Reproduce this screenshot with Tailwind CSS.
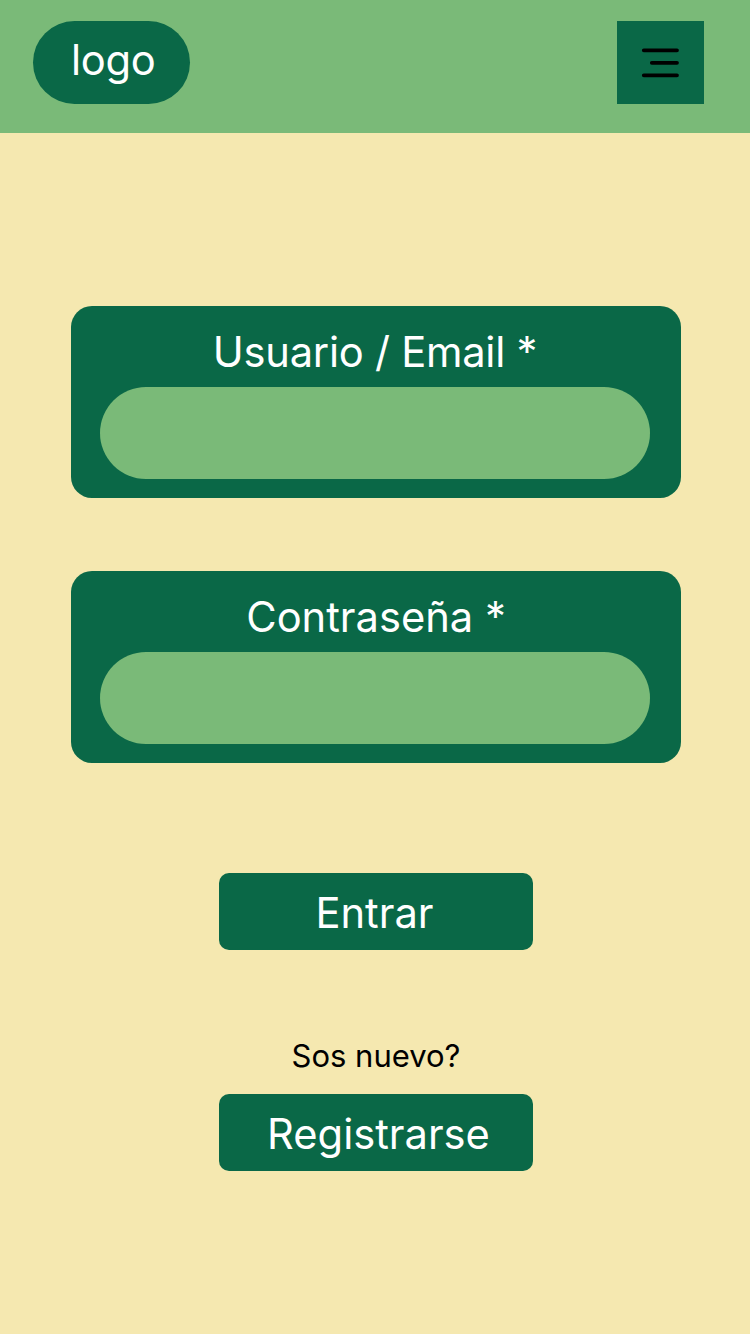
<!DOCTYPE html>
<html lang="es">
<head>
<meta charset="utf-8">
<title>Ingresar</title>
<script src="https://cdn.jsdelivr.net/npm/@tailwindcss/browser@4"></script>
</head>
<body class="h-[1334px] w-[750px] overflow-hidden bg-[#f5e8b0] font-['Inter',sans-serif] text-[41.67px] leading-[50px] text-white">
<header class="flex h-[133px] items-start justify-between bg-[#7aba78] pt-[21px] pr-[46px] pl-[33px]">
<div class="h-[83px] w-[157px] rounded-full bg-[#0a6847] pt-[14px] pl-[38px] tracking-[-0.3px]">logo</div>
<button class="flex h-[83px] w-[87px] items-center justify-center bg-[#0a6847]" aria-label="Menú">
<svg class="h-[50px] w-[50px]" viewBox="0 0 50 50" fill="none" stroke="#000" stroke-width="3.8" stroke-linecap="round"><path d="M7.8 12.3H41M15.8 24.8H41M7.8 37.3H41"/></svg>
</button>
</header>
<main class="flex flex-col items-center pt-[173px] pl-[2px]">
<label class="block h-[192px] w-[610px] rounded-[21px] bg-[#0a6847] pt-[21px] text-center tracking-[-0.25px]"><span class="block pr-[2px]">Usuario / Email *</span>
<span class="mt-[10px] ml-[29px] block h-[92px] w-[550px] rounded-full bg-[#7aba78]"></span></label>
<label class="mt-[73px] block h-[192px] w-[610px] rounded-[21px] bg-[#0a6847] pt-[21px] text-center"><span class="block">Contraseña *</span>
<span class="mt-[10px] ml-[29px] block h-[92px] w-[550px] rounded-full bg-[#7aba78]"></span></label>
<button class="mt-[110px] h-[77px] w-[314px] rounded-[10px] bg-[#0a6847] pt-[3px] pr-[3px]">Entrar</button>
<p class="mt-[86px] text-[31px] leading-[40px] text-black">Sos nuevo?</p>
<button class="mt-[18px] h-[77px] w-[314px] rounded-[10px] bg-[#0a6847] pt-[3px] pl-[5px]">Registrarse</button>
</main>
</body>
</html>
